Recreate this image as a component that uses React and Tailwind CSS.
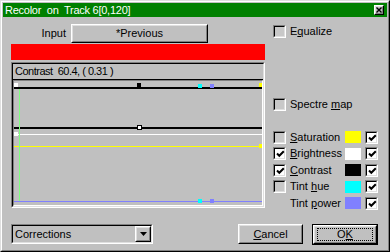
import React from 'react';

// Win95 style raised / sunken frames
const Raised = ({ className = '', children }) => (
    <div className={`border border-t-white border-l-white border-r-black border-b-black ${className}`}>
        <div className="w-full h-full border border-t-[#dfdfdf] border-l-[#dfdfdf] border-r-[#808080] border-b-[#808080] flex items-center justify-center">
            {children}
        </div>
    </div>
);

const Sunken = ({ className = '', inner = '', children }) => (
    <div className={`border border-t-[#808080] border-l-[#808080] border-r-white border-b-white ${className}`}>
        <div className={`w-full h-full border border-t-black border-l-black border-r-[#dfdfdf] border-b-[#dfdfdf] ${inner}`}>
            {children}
        </div>
    </div>
);

const CheckBox = ({ checked }) => (
    <Sunken className="w-[13px] h-[13px] shrink-0" inner={checked ? 'bg-white' : 'bg-[#c8c8c8]'}>
        {checked && (
            <svg width="11" height="11" viewBox="0 0 11 11">
                <path d="M2 4.5 L4.3 6.8 L8.8 2.3" stroke="black" strokeWidth="2" fill="none" />
            </svg>
        )}
    </Sunken>
);

const rows = [
    { label: 'aturation', key: 'S', left: false, color: 'bg-[#ffff00]', h: 'h-[16px]' },
    { label: 'rightness', key: 'B', left: true, color: 'bg-white', h: 'h-[17px]' },
    { label: 'ontrast', key: 'C', left: true, color: 'bg-black', h: 'h-[16px]' },
    { label: 'ue', pre: 'Tint ', key: 'h', left: false, color: 'bg-[#00ffff]', h: 'h-[17px]' },
    { label: 'ower', pre: 'Tint ', key: 'p', left: null, color: 'bg-[#8080ff]', h: 'h-[16px]' },
];

const Graph = () => (
    <svg width="248" height="124" viewBox="0 0 248 124" className="block">
        {/* top track */}
        <rect x="0" y="6" width="248" height="2" fill="black" />
        <rect x="0" y="2" width="4" height="4" fill="white" />
        <rect x="123" y="2" width="4" height="4" fill="black" />
        <rect x="184" y="3" width="4" height="4" fill="#00ffff" />
        <rect x="196" y="3" width="4" height="4" fill="#8080ff" />
        <rect x="245" y="2" width="4" height="4" fill="#ffff00" />
        {/* middle track */}
        <rect x="0" y="46" width="248" height="2" fill="black" />
        <rect x="123.5" y="44.5" width="4" height="4" fill="white" stroke="black" />
        {/* curves */}
        <rect x="0" y="53" width="248" height="1" fill="white" />
        <rect x="0" y="51" width="4" height="4" fill="white" />
        <rect x="0" y="65" width="248" height="1" fill="#ffff00" />
        <rect x="245" y="63" width="4" height="4" fill="#ffff00" />
        <rect x="5" y="8" width="1" height="112" fill="#80ff80" />
        <rect x="0" y="120" width="248" height="1" fill="#8080ff" />
        <rect x="184" y="118" width="4" height="4" fill="#00ffff" />
        <rect x="196" y="118" width="4" height="4" fill="#8080ff" />
    </svg>
);

const App = () => {
    return (
        <div className="w-[390px] h-[252px] bg-[#c0c0c0] font-['Liberation_Sans',Arial,sans-serif] text-[11px] text-black leading-none border border-t-[#dfdfdf] border-l-[#dfdfdf] border-r-black border-b-black">
            <div className="w-full h-full border border-t-white border-l-white border-r-[#808080] border-b-[#808080] p-px flex flex-col">
                {/* title bar */}
                <div className="h-[14px] bg-[#008000] flex items-center justify-between pl-[2px] pr-[3px]">
                    <span className="text-white whitespace-pre tracking-[-0.25px]">Recolor  on  Track 6[0,120]</span>
                    <Raised className="w-[10px] h-[10px] bg-[#c0c0c0]">
                        <svg width="6" height="6" viewBox="0 0 6 6">
                            <path d="M0.5 0.5 L5.5 5.5 M5.5 0.5 L0.5 5.5" stroke="black" strokeWidth="1.4" />
                        </svg>
                    </Raised>
                </div>

                {/* body */}
                <div className="pl-[8px] pt-[7px] flex flex-col">
                    <div className="flex">
                        {/* left column */}
                        <div className="w-[254px] flex flex-col">
                            <div className="h-[19px] flex items-center">
                                <span className="w-[55px] text-right">Input</span>
                                <Raised className="ml-[5px] w-[137px] h-[19px] bg-[#c0c0c0]">
                                    <span>*Previous</span>
                                </Raised>
                            </div>
                            <div className="mt-px h-[16px] bg-[#ff0000]" />
                            <Sunken className="mt-[2px] h-[146px]" inner="flex flex-col">
                                <div className="h-[16px] flex items-center pl-[2px] border-b border-b-black">
                                    <span className="whitespace-pre tracking-[-0.5px]">Contrast  60.4, ( 0.31 )</span>
                                </div>
                                <div className="flex-1 border border-t-[#808080] border-l-[#808080] border-r-white border-b-white overflow-hidden">
                                    <Graph />
                                </div>
                            </Sunken>
                        </div>

                        {/* right column */}
                        <div className="ml-[8px] w-[106px] flex flex-col">
                            <div className="h-[14px] flex items-center">
                                <CheckBox checked={false} />
                                <span className="ml-[4px]">E<u>q</u>ualize</span>
                            </div>
                            <div className="mt-[59px] h-[14px] flex items-center">
                                <CheckBox checked={false} />
                                <span className="ml-[4px]">Spectre <u>m</u>ap</span>
                            </div>
                            <div className="mt-[18px] flex flex-col">
                                {rows.map((r) => (
                                    <div key={r.key} className={`${r.h} flex items-center`}>
                                        {r.left === null ? (
                                            <div className="w-[13px] h-[13px]" />
                                        ) : (
                                            <CheckBox checked={r.left} />
                                        )}
                                        <span className="ml-[4px] w-[55px]">
                                            {r.pre}<u>{r.key}</u>{r.label}
                                        </span>
                                        <div className={`w-[16px] h-[12px] ${r.color}`} />
                                        <div className="ml-[4px]">
                                            <CheckBox checked={true} />
                                        </div>
                                    </div>
                                ))}
                            </div>
                        </div>
                    </div>

                    {/* bottom row */}
                    <div className="mt-[13px] h-[20px] flex items-center">
                        <Sunken className="w-[142px] h-[20px]" inner="flex items-center justify-between bg-[#c0c0c0]">
                            <span className="pl-[2px]">Corrections</span>
                            <Raised className="w-[16px] h-[16px] bg-[#c0c0c0]">
                                <svg width="7" height="4" viewBox="0 0 7 4">
                                    <path d="M0 0 H7 L3.5 4 Z" fill="black" />
                                </svg>
                            </Raised>
                        </Sunken>
                        <Raised className="ml-[85px] w-[65px] h-[20px] bg-[#c0c0c0]">
                            <span><u>C</u>ancel</span>
                        </Raised>
                        <div className="ml-[9px] w-[66px] h-[21px] border border-black">
                            <Raised className="w-full h-full bg-[#c0c0c0]">
                                <div className="w-[56px] h-[13px] border border-dotted border-black flex items-center justify-center">
                                    <span>O<u>K</u></span>
                                </div>
                            </Raised>
                        </div>
                    </div>
                </div>
            </div>
        </div>
    );
};

export default App;
